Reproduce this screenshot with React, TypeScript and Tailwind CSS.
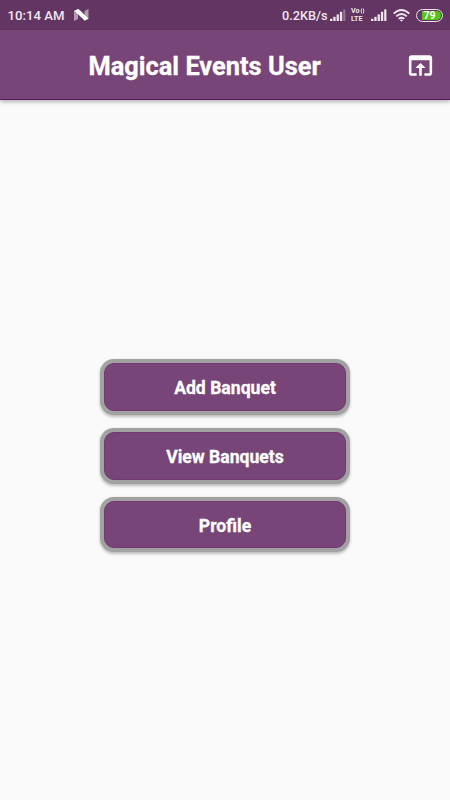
import React from "react";

const actions = ["Add Banquet", "View Banquets", "Profile"];

function SignalIcon({ dimLast }: { dimLast?: boolean }) {
  return (
    <svg width="17" height="12" viewBox="0 0 17 12" fill="#efe6ef" className="block">
      <rect x="0" y="9.8" width="2.4" height="2.2" />
      <rect x="3.3" y="7.8" width="2.3" height="4.2" />
      <rect x="6.6" y="5.4" width="2.3" height="6.6" />
      <rect x="9.9" y="2.8" width="2.3" height="9.2" />
      <rect x="13.2" y="0.4" width="2.2" height="11.6" opacity={dimLast ? 0.35 : 1} />
    </svg>
  );
}

function StatusBar() {
  return (
    <div className="flex h-[30px] items-center bg-[#633562] text-[13px] font-medium text-[#efe6ef]">
      <span className="ml-[7.5px] w-[57.5px] whitespace-nowrap pt-px text-[13.2px] leading-[30px]">10:14 AM</span>
      <svg width="15" height="12" viewBox="0 0 15 12" className="ml-[9px] block">
        <path d="M0 2 4 0v10L0 12zM10.5 2l4-2v10l-4 2z" fill="#b39ab3" />
        <path d="M.3 1.7 4.6 0 14.4 9.6l-3.8 2z" fill="#fff" />
      </svg>
      <span className="ml-auto w-[45px] whitespace-nowrap pt-px text-[12.7px] leading-[30px]">0.2KB/s</span>
      <div className="ml-[3px]"><SignalIcon dimLast /></div>
      <div className="ml-[4px] flex w-[15px] flex-col text-[7.2px] font-bold">
        <div className="flex h-[7px] items-center whitespace-nowrap">
          <span className="h-[8px] leading-[7px]">Vo</span>
          <svg width="5" height="6" viewBox="0 0 5 6" fill="none" stroke="#efe6ef" strokeWidth="0.9">
            <path d="M1.8.5Q.3 3 1.8 5.5M3.2.5Q4.7 3 3.2 5.5" />
          </svg>
        </div>
        <div className="h-[9px] leading-[9px]">LTE</div>
      </div>
      <div className="ml-[5px]"><SignalIcon /></div>
      <svg width="17" height="13" viewBox="0 0 17 13" className="ml-[5px] block" fill="none" stroke="#efe6ef" strokeWidth="1.8">
        <path d="M.7 4.7Q8.5-2.6 16.3 4.7M3.2 7.4q5.3-4.8 10.6 0M5.7 9.9q2.8-2.4 5.6 0" />
        <path d="m6.9 11.1 1.6 1.6 1.6-1.6q-1.6-1.2-3.2 0" fill="#efe6ef" stroke="none" />
      </svg>
      <div className="ml-[6px] mr-[7px] flex h-[13px] w-[27px] rounded-full border border-[#eee5ee] p-px">
        <div className="flex flex-1 items-center justify-center rounded-full bg-[linear-gradient(90deg,#633562_17%,#52c41a_17%)] pt-px text-[10.5px] font-bold leading-[10px] text-white">
          79
        </div>
      </div>
    </div>
  );
}

export default function App() {
  return (
    <div className="flex h-[800px] w-[450px] flex-col overflow-hidden bg-[#fafafa] font-['Roboto',sans-serif]">
      <StatusBar />
      <header className="flex h-[70px] items-center border-b border-[#5c155f] bg-[#774577] pt-[3px] shadow-[0_2px_4px_rgba(0,0,0,0.28)]">
        <h1 className="ml-[88.5px] w-[234px] whitespace-nowrap text-[25.4px] font-bold leading-[34px] text-white [-webkit-text-stroke:0.3px_#fff]">
          Magical Events User
        </h1>
        <svg width="31" height="31" viewBox="0 0 24 24" fill="#fff" className="mb-[2px] ml-auto mr-[14.5px] block">
          <path d="M19 4H5c-1.11 0-2 .9-2 2v12c0 1.1.89 2 2 2h4v-2H5V8h14v10h-4v2h4c1.1 0 2-.9 2-2V6c0-1.1-.89-2-2-2zm-7 6-4 4h3v6h2v-6h3l-4-4z" />
        </svg>
      </header>
      <main className="flex flex-col items-center gap-[13px] pt-[259px]">
        {actions.map((label) => (
          <button
            key={label}
            className="h-[55.75px] w-[250px] rounded-[14px] bg-[#a2a2a2] p-1 shadow-[0_1.5px_3px_rgba(0,0,0,0.25)]"
          >
            <span className="flex h-full items-center justify-center rounded-[10px] border border-[#733773] bg-[#774577] pt-[4px] text-[17.6px] font-bold leading-none text-white [-webkit-text-stroke:0.3px_#fff]">
              {label}
            </span>
          </button>
        ))}
      </main>
    </div>
  );
}
